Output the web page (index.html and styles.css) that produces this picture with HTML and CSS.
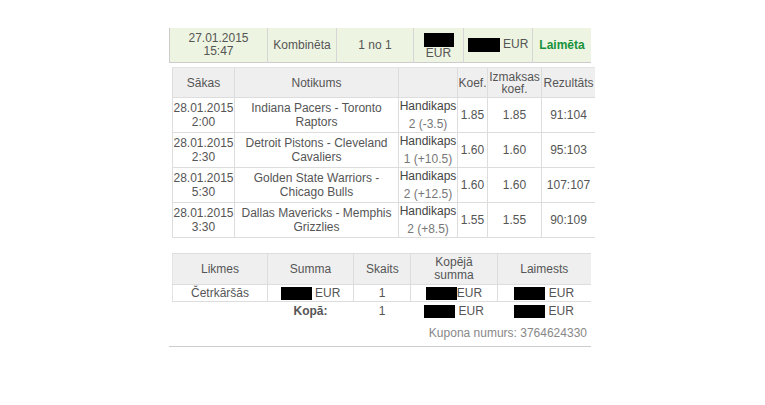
FILE: index.html
```html
<!DOCTYPE html>
<html lang="lv">
<head>
    <meta charset="UTF-8">
    <meta name="viewport" content="width=device-width, initial-scale=1.0">
    <title>Kupons</title>
    <link rel="stylesheet" href="styles.css">
</head>
<body>
    <div class="coupon">
        <table class="summary">
            <tr>
                <td class="c-date">27.01.2015<br>15:47</td>
                <td class="c-type">Kombinēta</td>
                <td class="c-count">1 no 1</td>
                <td class="c-stake"><span class="hidden hidden-top"></span><br>EUR</td>
                <td class="c-win"><span class="hidden hidden-mid"></span> EUR</td>
                <td class="c-status won">Laimēta</td>
            </tr>
        </table>

        <table class="events">
            <tr>
                <th class="e-date">Sākas</th>
                <th class="e-name">Notikums</th>
                <th class="e-market"></th>
                <th class="e-odds">Koef.</th>
                <th class="e-pay">Izmaksas koef.</th>
                <th class="e-result">Rezultāts</th>
            </tr>
            <tr>
                <td>28.01.2015<br>2:00</td>
                <td>Indiana Pacers - Toronto Raptors</td>
                <td class="market"><div class="market-name">Handikaps</div><div class="market-pick">2 (-3.5)</div></td>
                <td>1.85</td>
                <td>1.85</td>
                <td>91:104</td>
            </tr>
            <tr>
                <td>28.01.2015<br>2:30</td>
                <td>Detroit Pistons - Cleveland Cavaliers</td>
                <td class="market"><div class="market-name">Handikaps</div><div class="market-pick">1 (+10.5)</div></td>
                <td>1.60</td>
                <td>1.60</td>
                <td>95:103</td>
            </tr>
            <tr>
                <td>28.01.2015<br>5:30</td>
                <td>Golden State Warriors - Chicago Bulls</td>
                <td class="market"><div class="market-name">Handikaps</div><div class="market-pick">2 (+12.5)</div></td>
                <td>1.60</td>
                <td>1.60</td>
                <td>107:107</td>
            </tr>
            <tr>
                <td>28.01.2015<br>3:30</td>
                <td>Dallas Mavericks - Memphis Grizzlies</td>
                <td class="market"><div class="market-name">Handikaps</div><div class="market-pick">2 (+8.5)</div></td>
                <td>1.55</td>
                <td>1.55</td>
                <td>90:109</td>
            </tr>
        </table>

        <table class="bets">
            <tr>
                <th class="b-kind">Likmes</th>
                <th class="b-sum">Summa</th>
                <th class="b-count">Skaits</th>
                <th class="b-total">Kopējā summa</th>
                <th class="b-win">Laimests</th>
            </tr>
            <tr class="bet-row">
                <td>Četrkāršās</td>
                <td><span class="hidden"></span> EUR</td>
                <td>1</td>
                <td><span class="hidden"></span>EUR</td>
                <td><span class="hidden"></span> EUR</td>
            </tr>
            <tr class="total-row">
                <td></td>
                <td class="total-label">Kopā:</td>
                <td>1</td>
                <td><span class="hidden"></span> EUR</td>
                <td><span class="hidden"></span> EUR</td>
            </tr>
        </table>

        <div class="coupon-number">Kupona numurs: 3764624330</div>
    </div>
</body>
</html>
```

FILE: styles.css
```css
body {
    margin: 0;
    background: #fff;
    font-family: "Liberation Sans", Arial, sans-serif;
    font-size: 12px;
    color: #555;
}

.coupon {
    width: 422px;
    margin: 28px 0 0 169px;
}

table {
    border-collapse: collapse;
    table-layout: fixed;
}

td, th {
    text-align: center;
    padding: 0;
    font-weight: normal;
}

/* top summary row */
.summary {
    width: 422px;
    background: #edf4e1;
    border-left: 1px solid #ccc;
    border-bottom: 1px solid #ccc;
}

.summary td {
    height: 32px;
    line-height: 13px;
    border-right: 1px solid #d6d6d6;
    color: #555;
}

.summary td:last-child {
    border-right: none;
}

.c-date { width: 97px; }
.c-type { width: 68px; }
.c-count { width: 76px; }
.c-stake { width: 49px; }
.c-win { width: 68px; }
.c-status { width: 58px; }

.won {
    color: #17923b !important;
    font-weight: bold;
}

.hidden {
    display: inline-block;
    width: 31px;
    height: 13px;
    background: #000;
    vertical-align: middle;
}

.hidden-top {
    width: 30px;
    height: 14px;
    vertical-align: top;
    margin-top: 1px;
}

.hidden-mid {
    width: 32px;
    height: 14px;
}

.c-stake {
    line-height: 14px;
    padding-top: 2px !important;
}

/* events table */
.events {
    width: 419px;
    margin: 4px 0 0 3px;
    border-left: 1px solid #ddd;
}

.events th {
    background: #efefef;
    height: 29px;
    line-height: 12px;
    border: 1px solid #ddd;
    border-top: 1px solid #e3e3e3;
    border-right: none;
    color: #555;
}

.events th:first-child {
    border-left: none;
}

.events td {
    height: 34px;
    line-height: 14px;
    border-right: 1px solid #ddd;
    border-bottom: 1px solid #ddd;
    color: #555;
}

.events td:last-child {
    border-right: none;
}

.e-date { width: 61px; }
.e-name { width: 163px; }
.e-market { width: 58px; }
.e-odds { width: 29px; }
.e-pay { width: 53px; }
.e-result { width: 53px; }

.market-name {
    color: #444;
    line-height: 14px;
}

.market-pick {
    color: #777;
    line-height: 14px;
    margin-top: 4px;
}

/* bets table */
.bets {
    width: 418px;
    margin: 15px 0 0 3px;
}

.bets th {
    box-sizing: border-box;
    background: #efefef;
    height: 31px;
    line-height: 13px;
    padding: 0 12px;
    border: 1px solid #ddd;
    color: #555;
}

.bets th:first-child {
    border-left: 1px solid #e3e3e3;
}

.bets th:last-child,
.bets .bet-row td:last-child {
    border-right: none;
}

.b-kind { width: 95px; }
.b-sum { width: 86px; }
.b-count { width: 57px; }
.b-total { width: 87px; }
.b-win { width: 93px; }

.bet-row td {
    height: 16px;
    border: 1px solid #ddd;
    border-top: none;
}

.bet-row td:first-child {
    border-left: 1px solid #e3e3e3;
}

.total-row td {
    height: 18px;
}

.total-label {
    font-weight: bold !important;
    color: #555;
}

.coupon-number {
    text-align: right;
    color: #888;
    padding: 6px 4px 0 0;
    height: 20px;
    border-bottom: 1px solid #ccc;
}
```
